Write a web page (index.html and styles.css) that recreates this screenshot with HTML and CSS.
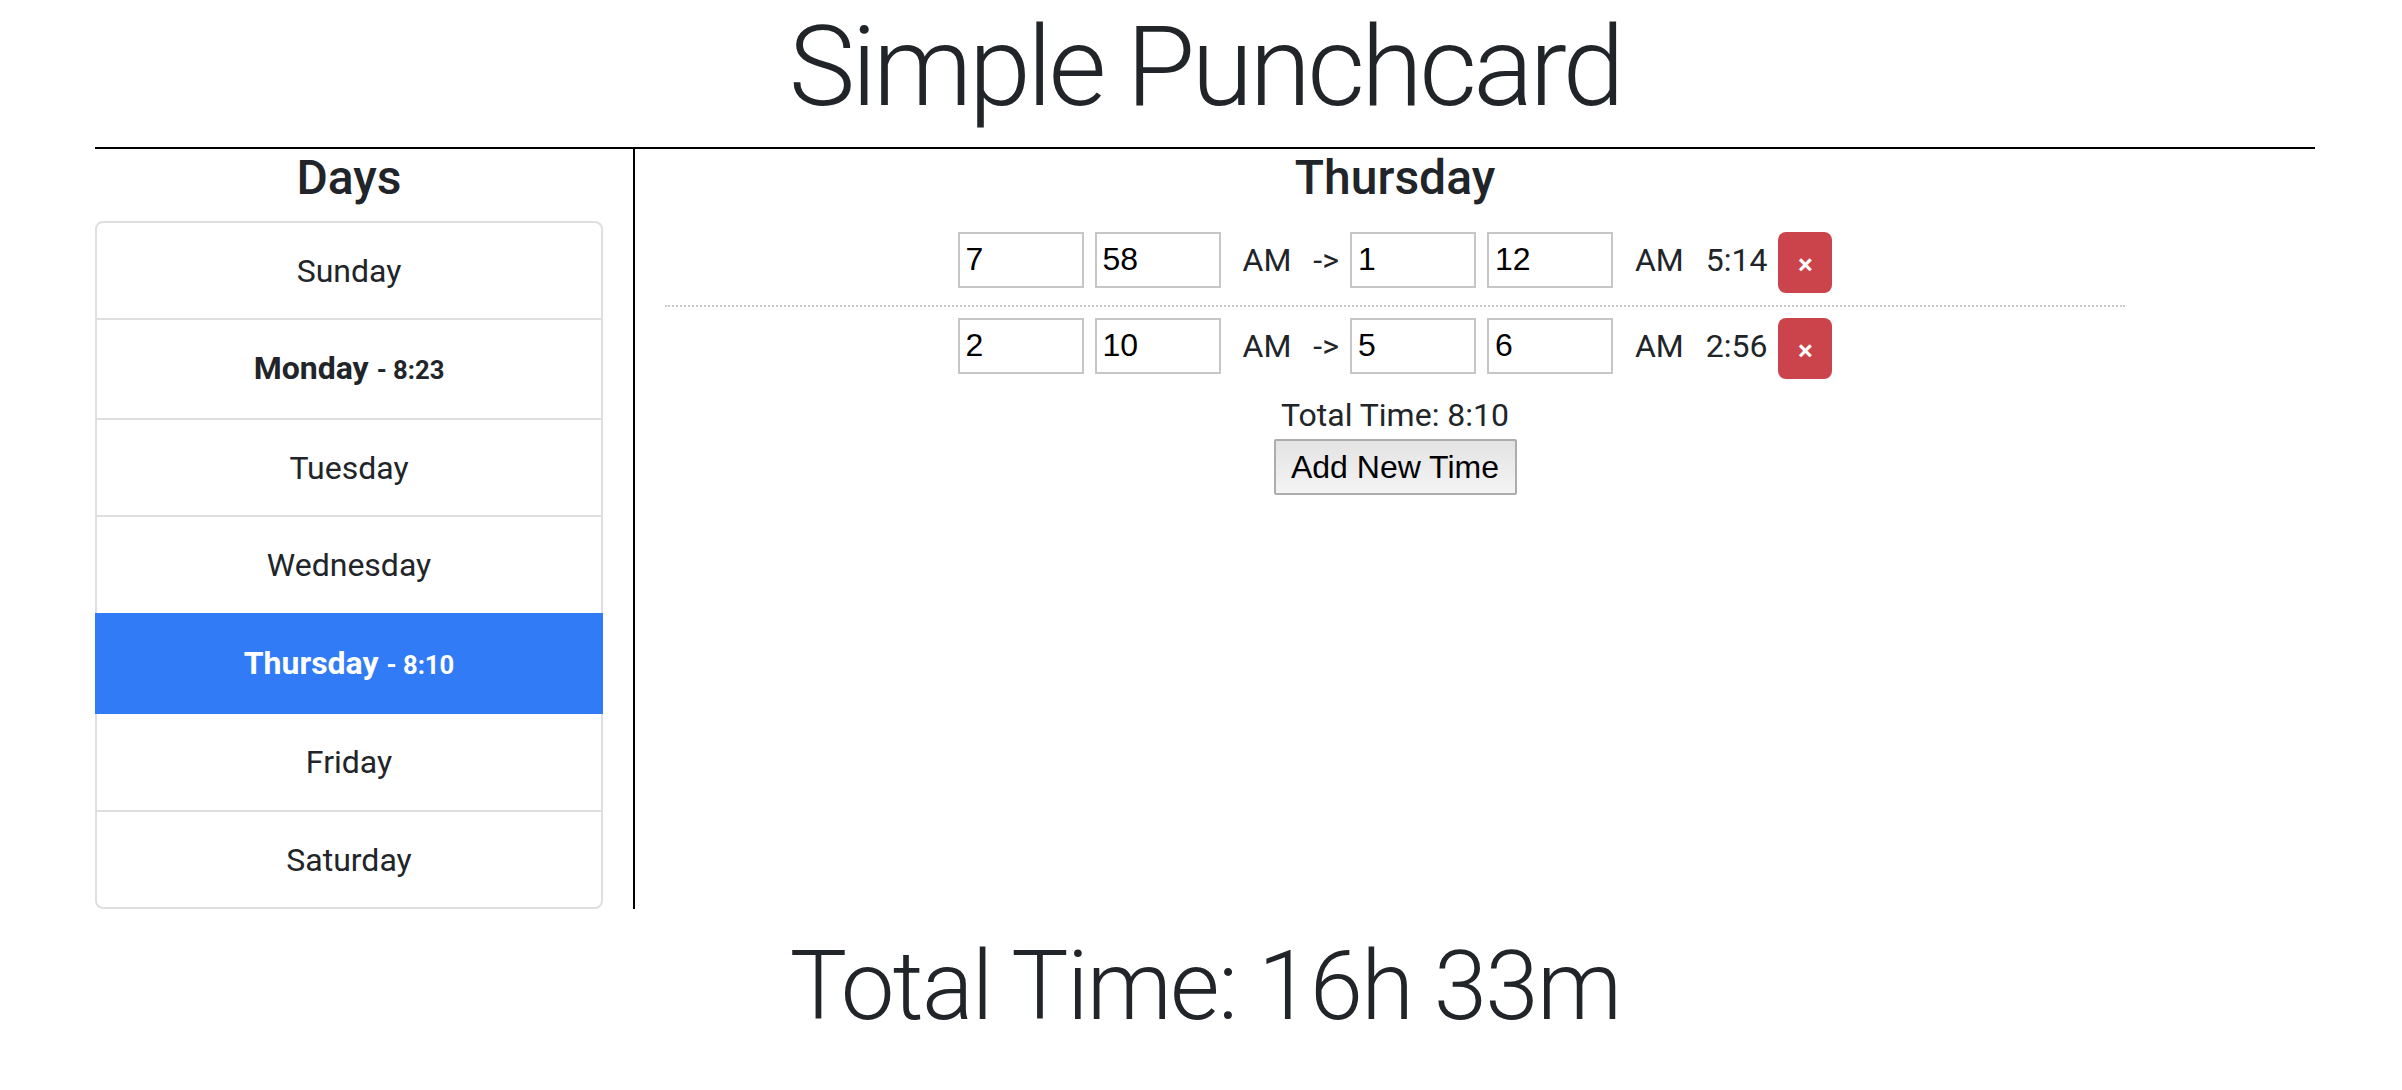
FILE: index.html
```html
<!DOCTYPE html>
<html lang="en">
<head>
<meta charset="utf-8">
<title>Simple Punchcard</title>
<link rel="stylesheet" href="styles.css">
</head>
<body>
<div class="container">
  <h1 class="title">Simple Punchcard</h1>
  <div class="main">
    <div class="days-col">
      <h4 class="col-heading">Days</h4>
      <ul class="day-list">
        <li class="day">Sunday</li>
        <li class="day"><strong>Monday</strong> <small>- 8:23</small></li>
        <li class="day">Tuesday</li>
        <li class="day">Wednesday</li>
        <li class="day active"><strong>Thursday</strong> <small>- 8:10</small></li>
        <li class="day">Friday</li>
        <li class="day">Saturday</li>
      </ul>
    </div>
    <div class="detail-col">
      <h4 class="col-heading">Thursday</h4>
      <div class="entry">
        <input class="time-input gap-s" type="text" value="7">
        <input class="time-input gap-l" type="text" value="58">
        <span class="label gap-l">AM</span>
        <span class="label gap-s">-&gt;</span>
        <input class="time-input gap-s" type="text" value="1">
        <input class="time-input gap-l" type="text" value="12">
        <span class="label gap-l">AM</span>
        <span class="label gap-s">5:14</span>
        <button class="remove-btn" type="button">&times;</button>
      </div>
      <div class="entry">
        <input class="time-input gap-s" type="text" value="2">
        <input class="time-input gap-l" type="text" value="10">
        <span class="label gap-l">AM</span>
        <span class="label gap-s">-&gt;</span>
        <input class="time-input gap-s" type="text" value="5">
        <input class="time-input gap-l" type="text" value="6">
        <span class="label gap-l">AM</span>
        <span class="label gap-s">2:56</span>
        <button class="remove-btn" type="button">&times;</button>
      </div>
      <div class="day-total">Total Time: 8:10</div>
      <div class="add-wrap"><button class="add-btn" type="button">Add New Time</button></div>
    </div>
  </div>
  <h2 class="grand-total">Total Time: 16h 33m</h2>
</div>
</body>
</html>
```

FILE: styles.css
```css
html, body {
  margin: 0;
  padding: 0;
  background: #fff;
}

body {
  font-family: Roboto, "Liberation Sans", sans-serif;
  font-size: 32px;
  line-height: 48px;
  color: #212529;
}

.container {
  width: 2220px;
  margin-left: 95px;
}

.title {
  margin: 0 0 13px;
  font-family: Roboto, "Liberation Sans", sans-serif;
  font-weight: 300;
  font-size: 112px;
  line-height: 1.2;
  letter-spacing: -0.033em;
  text-align: center;
}

.main {
  display: flex;
  border-top: 2px solid #000;
}

.days-col {
  width: 508px;
  padding-right: 30px;
  border-right: 2px solid #000;
}

.detail-col {
  width: 1460px;
  padding-left: 30px;
}

.col-heading {
  margin: 0 0 14px;
  font-size: 48px;
  font-weight: 500;
  line-height: 1.2;
  text-align: center;
}

.day-list {
  list-style: none;
  margin: 0;
  padding: 0;
}

.day {
  position: relative;
  padding: 24px 40px 23.5px;
  margin-bottom: -2px;
  border: 2px solid #dfdfdf;
  background: #fff;
  text-align: center;
  font-size: 32px;
  line-height: 48px;
}

.day:first-child {
  border-radius: 8px 8px 0 0;
}

.day:last-child {
  margin-bottom: 0;
  border-radius: 0 0 8px 8px;
}

.day strong {
  font-weight: 700;
}

.day small {
  font-size: 80%;
  font-weight: 700;
}

.day.active {
  z-index: 1;
  background: #327bf6;
  border-color: #327bf6;
  color: #fff;
}

.entry {
  display: flex;
  justify-content: center;
  align-items: flex-start;
  padding: 11px 0 12px;
}

.entry + .entry {
  border-top: 2px dotted #c9c9c9;
}

.time-input {
  box-sizing: border-box;
  width: 126px;
  height: 56px;
  margin: 0;
  padding: 0 6px;
  border: 2px solid #c6c6c6;
  border-radius: 0;
  font-family: "Liberation Sans", Arial, sans-serif;
  font-size: 32px;
  color: #000;
  background: #fff;
  outline: none;
}

.label {
  line-height: 56px;
  font-size: 32px;
  white-space: nowrap;
}

.gap-s {
  margin-right: 11px;
}

.gap-l {
  margin-right: 22px;
}

.remove-btn {
  width: 54px;
  height: 61px;
  padding: 6px 0 0;
  border: 0;
  border-radius: 8px;
  background: #cc444b;
  color: #fff;
  font-family: Roboto, "Liberation Sans", sans-serif;
  font-size: 28px;
  font-weight: 600;
  line-height: 1;
}

.day-total {
  text-align: center;
  font-size: 32px;
  line-height: 48px;
}

.add-wrap {
  text-align: center;
  line-height: 0;
}

.add-btn {
  box-sizing: border-box;
  width: 243px;
  height: 56px;
  margin: 0;
  padding: 0;
  border: 2px solid #adadad;
  border-radius: 2px;
  background: linear-gradient(#e3e3e3, #f4f4f4);
  font-family: "Liberation Sans", Arial, sans-serif;
  font-size: 32px;
  line-height: 52px;
  color: #000;
}

.grand-total {
  margin: 20px 0 0;
  font-family: Roboto, "Liberation Sans", sans-serif;
  font-weight: 300;
  font-size: 96px;
  line-height: 1.2;
  letter-spacing: -0.018em;
  text-align: center;
}
```
